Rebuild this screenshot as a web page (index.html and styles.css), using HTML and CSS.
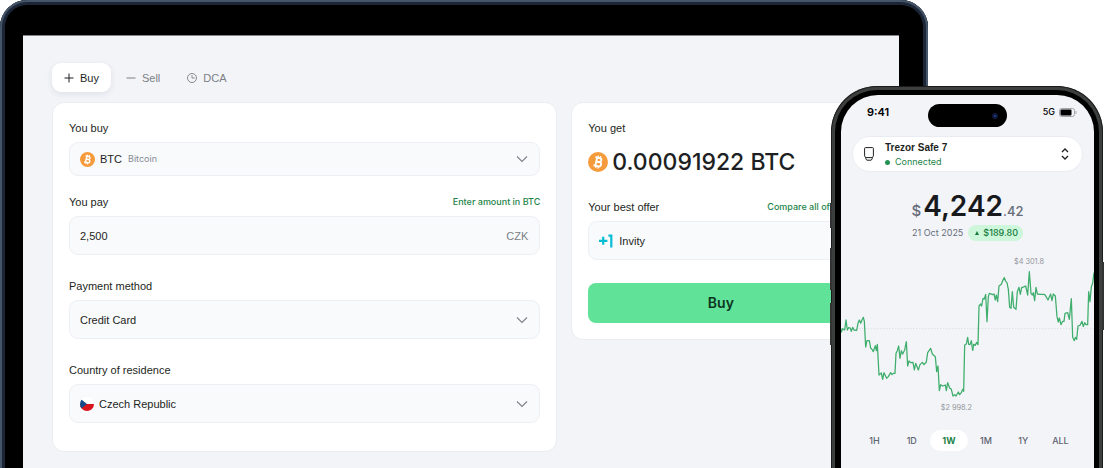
FILE: index.html
```html
<!DOCTYPE html>
<html lang="en">
<head>
<meta charset="utf-8">
<meta name="viewport" content="width=device-width, initial-scale=1">
<title>Trade</title>
<link rel="stylesheet" href="styles.css">
</head>
<body>
<svg width="0" height="0" class="defs" aria-hidden="true">
  <symbol id="btc" viewBox="0 0 20 20">
    <circle cx="10" cy="10" r="10" fill="#f59b3c"/>
    <g transform="rotate(13 10 10)" fill="none" stroke="#fff" stroke-width="1.9">
      <path d="M6.4 5.7h4.4a2 2 0 0 1 0 4.1H8.2M6.4 14.2h5a2.2 2.2 0 0 0 0-4.4H8.2M8.2 5.7v8.5"/>
      <path d="M9 3.6v2M11.4 3.6v2M9 14.4v2M11.4 14.4v2" stroke-width="1.3"/>
    </g>
  </symbol>
  <symbol id="chevron" viewBox="0 0 12 8">
    <path d="M1 1.5l5 5 5-5" fill="none" stroke="#7b8087" stroke-width="1.1"/>
  </symbol>
</svg>

<main class="stage">
  <section class="laptop">
    <div class="laptop-screen">
      <nav class="tabs" aria-label="Trade type">
        <button class="tab tab-active" type="button">
          <svg class="tab-icon" viewBox="0 0 10 10"><path d="M5 .5v9M.5 5h9" stroke="currentColor" fill="none"/></svg>Buy
        </button>
        <button class="tab" type="button">
          <svg class="tab-icon" viewBox="0 0 10 10"><path d="M.5 5h9" stroke="currentColor" fill="none"/></svg>Sell
        </button>
        <button class="tab" type="button">
          <svg class="tab-icon" viewBox="0 0 10 10"><circle cx="5" cy="5" r="4.5" stroke="currentColor" fill="none" stroke-width=".9"/><path d="M5 2.2V5h2.8" stroke="currentColor" fill="none" stroke-width=".9"/></svg>DCA
        </button>
      </nav>

      <div class="cards">
        <form class="card form">
          <div class="group">
            <label class="label" for="coin">You buy</label>
            <div class="field field-short">
              <svg class="coin"><use href="#btc"/></svg>
              <select id="coin" class="value"><option>BTC</option></select>
              <span class="note">Bitcoin</span>
              <svg class="chevron"><use href="#chevron"/></svg>
            </div>
          </div>
          <div class="group">
            <div class="label-row">
              <label class="label" for="amount">You pay</label>
              <a class="link" href="#amount">Enter amount in BTC</a>
            </div>
            <div class="field">
              <input id="amount" class="value value-wide" type="text" value="2,500">
              <span class="unit">CZK</span>
            </div>
          </div>
          <div class="group group-spaced">
            <label class="label" for="payment">Payment method</label>
            <div class="field">
              <select id="payment" class="value value-wide"><option>Credit Card</option></select>
              <svg class="chevron"><use href="#chevron"/></svg>
            </div>
          </div>
          <div class="group group-spaced">
            <label class="label" for="country">Country of residence</label>
            <div class="field">
              <svg class="flag" viewBox="0 0 14 14">
                <clipPath id="disc"><circle cx="7" cy="7" r="7"/></clipPath>
                <g clip-path="url(#disc)"><path d="M0 0h14v7H0z" fill="#fff"/><path d="M0 7h14v7H0z" fill="#d8141c"/><path d="M0 1.5L7 7l-7 5.5z" fill="#164a86"/></g>
              </svg>
              <select id="country" class="value value-wide"><option>Czech Republic</option></select>
              <svg class="chevron"><use href="#chevron"/></svg>
            </div>
          </div>
        </form>

        <section class="card quote">
          <h2 class="label">You get</h2>
          <p class="receive"><svg class="coin-large"><use href="#btc"/></svg>0.00091922 BTC</p>
          <div class="label-row">
            <label class="label" for="offer">Your best offer</label>
            <a class="link" href="#offer">Compare all offers</a>
          </div>
          <div class="field">
            <svg class="invity" viewBox="0 0 14 14"><path d="M0 6.8h8.4M4.2 2.8v8M9.4 1.7h2.9V13.4" fill="none" stroke="#08bcd4" stroke-width="2.2"/></svg>
            <select id="offer" class="value value-wide"><option>Invity</option></select>
          </div>
          <button class="buy" type="button">Buy</button>
        </section>
      </div>
    </div>
  </section>

  <section class="phone">
    <i class="key key-action"></i><i class="key key-up"></i><i class="key key-down"></i><i class="key key-power"></i>
    <div class="bezel">
      <div class="phone-screen">
        <header class="status">
          <span class="time">9:41</span>
          <span class="island"><i class="lens"></i></span>
          <span class="signal">5G
            <svg class="battery" viewBox="0 0 18 9"><rect x=".5" y=".5" width="15" height="8" rx="2" fill="none" stroke="#a3a5aa"/><rect x="1.5" y="1.5" width="11" height="6" rx="1" fill="#000"/><path d="M17 3.2v2.6" stroke="#a3a5aa"/></svg>
          </span>
        </header>

        <button class="device" type="button">
          <svg class="device-icon" viewBox="0 0 10 14"><path d="M1.5.6h7a.9.9 0 0 1 .9.9v7.4L8.4 10.6H1.6L.6 8.9V1.5a.9.9 0 0 1 .9-.9zM1.8 10.6v1.2l1 1.4h4.4l1-1.4v-1.2" fill="none" stroke="#1d1f22" stroke-width="1"/></svg>
          <span class="device-text"><span class="device-name">Trezor Safe 7</span><span class="device-state">Connected</span></span>
          <svg class="sorter" viewBox="0 0 8 12"><path d="M1 4l3-3 3 3M1 8l3 3 3-3" fill="none" stroke="#1d1f22" stroke-width="1.3"/></svg>
        </button>

        <p class="balance"><span class="currency">$</span><strong class="whole">4,242</strong><span class="cents">.42</span></p>
        <p class="change"><span>21 Oct 2025</span><span class="gain"><svg class="rise" viewBox="0 0 4 4"><path d="M2 0l2 4H0z" fill="#157a3c"/></svg>$189.80</span></p>

        <svg class="chart" viewBox="15 0 759 486" role="img" aria-label="Balance over one week">
          <path d="M15 236H774" stroke="#dcdee3" stroke-width="3" stroke-dasharray="4 5"/>
          <g fill="none" stroke="#3fae6c" stroke-width="3.8" stroke-linejoin="round">
            <polyline points="13,232 16,246 20,236 26,240 30,210 34,240 38,233 43,234 46,244 50,232 54,240 62,241 66,220 70,210 74,220 78,210 82,202 85,214 89,291 93,272 100,272 104,294 108,298 112,305 118,287 121,302 124,283 129,375 136,369 140,388 144,368 152,385 157,380 164,368 168,374 172,370 177,370 180,310 184,302 188,288 192,325 196,302 200,312 206,300 211,275 215,348 219,333 224,338 231,337 235,360 239,340 247,360 252,344 259,337 264,344 271,336 275,308 284,295 289,312 298,320 302,365 306,348 310,422 314,404 320,408 328,405 331,422 335,398 341,414 346,418 351,438 356,434 360,438 367,426 371,434 376,428 380,418 383,424 386,285 391,282 395,262 398,283 402,284 406,272 410,302"/>
            <polyline transform="translate(372)" points="38,302 41,283 46,286 50,277 54,284 57,168 62,162 65,168 69,145 73,147 77,133 81,215 85,140 88,130 98,134 102,132 106,150 109,135 113,155 117,108 124,103 128,92 133,83 137,94 141,98 145,118 149,172 153,175 157,125 161,172 168,178 172,125 177,112 181,133 185,113 193,110 197,108 203,135 208,65 213,130 217,135 220,128 224,152 228,112 232,132 240,133 252,133 256,136 264,150 272,132 276,152 280,132 286,138 291,200 295,216 298,204 303,224 308,214 312,214 315,190 323,188 328,208 334,146 338,262 343,272 346,262 350,268 354,228 360,226 366,214 370,230 374,218 378,224 383,224 386,125 390,155 394,110 398,100 402,68"/>
          </g>
          <text class="chart-label" x="579" y="43">$4 301.8</text>
          <text class="chart-label" x="361" y="480">$2 998.2</text>
        </svg>

        <nav class="ranges" aria-label="Chart range">
          <button class="range" type="button">1H</button>
          <button class="range" type="button">1D</button>
          <button class="range range-active" type="button">1W</button>
          <button class="range" type="button">1M</button>
          <button class="range" type="button">1Y</button>
          <button class="range" type="button">ALL</button>
        </nav>
      </div>
    </div>
  </section>
</main>
</body>
</html>
```
FILE: styles.css
```css
* { box-sizing: border-box; }

body {
  margin: 0;
  background: #fff;
  color: #1d1f22;
  font: 500 11px/14px Inter, "Liberation Sans", sans-serif;
}

h2, p { margin: 0; font: inherit; }
button, input, select { margin: 0; padding: 0; border: 0; background: none; color: inherit; font: inherit; }
select { appearance: none; }
svg { display: block; flex: none; }
.defs { position: absolute; }

.stage { position: relative; height: 100vh; overflow: hidden; }

/* Laptop */
.laptop {
  width: 84.1%;
  min-height: 600px;
  padding: 35px 29px 0 23px;
  border-radius: 27px 27px 0 0;
  background: #000;
  box-shadow: inset 0 0 0 2px #46546a, inset 0 0 0 5px #1c2636;
}
.laptop-screen {
  min-height: 565px;
  padding: 27px 29px 0;
  background: #f3f4f8;
  border-top: 1px solid #85868a;
}

.tabs { display: flex; gap: 5px; margin-bottom: 10px; }
.tab { display: flex; align-items: center; gap: 6px; height: 29px; padding: 0 12px; border-radius: 9px; color: #7b8087; }
.tab + .tab { padding: 0 10px; }
.tab + .tab + .tab { padding-left: 12px; }
.tab-active { background: #fff; color: #1d1f22; box-shadow: 0 2px 6px #1d264018; }
.tab-icon { width: 10px; height: 10px; }

.cards { display: grid; grid-template-columns: 505fr 299fr; align-items: start; gap: 14px; }
.card { padding: 18px 16px 16px; border: 1px solid #e9ecf1; border-radius: 12px; background: #fff; }
.form { padding-bottom: 28px; }
.group { display: flex; flex-direction: column; gap: 7px; }
.group + .group { margin-top: 19px; }
.group + .group-spaced { margin-top: 24px; }
.label { display: block; }
.tab, .label, .value, .unit { font-family: "Liberation Sans", sans-serif; font-weight: 400; }
.label-row { display: flex; justify-content: space-between; align-items: center; white-space: nowrap; }
.link { color: #1e8449; font-size: 9px; text-decoration: none; }

.field {
  display: flex;
  align-items: center;
  height: 39px;
  padding: 0 11px 0 10px;
  border: 1px solid #edeff3;
  border-radius: 9px;
  background: #f9fafc;
}
.field-short { height: 34px; }
.value { height: 20px; outline: 0; }
.value-wide { flex: 1; min-width: 0; }
.coin { width: 15px; height: 15px; margin-right: 5px; }
.note { margin-left: 6px; color: #858a93; font-size: 9px; font-weight: 400; }
.unit { color: #7b8087; }
.chevron { width: 12px; height: 8px; margin-left: auto; }
.flag { width: 14px; height: 14px; margin-right: 5px; }
.invity { width: 14px; height: 14px; margin-right: 6px; }

.receive { display: flex; align-items: center; gap: 4px; margin: 13px 0 24px; font-size: 23px; line-height: 28px; white-space: nowrap; }
.coin-large { width: 20px; height: 20px; }
.quote .link { padding-right: 7px; }
.quote .field { margin-top: 7px; }
.buy { display: block; width: 100%; height: 40px; margin-top: 23px; border-radius: 8px; background: #60e399; color: #0c3520; font-size: 14px; font-weight: 600; }

/* Phone */
.phone {
  position: absolute;
  top: 86px;
  right: 1px;
  width: 272px;
  height: 560px;
  padding: 4px;
  border-radius: 46px;
  background: #3d3e3e;
  box-shadow: inset 0 0 0 1px #1c1c1c;
}
.bezel { height: 100%; padding: 5px 5px 5px 6px; border-radius: 42px; background: #000; }
.phone-screen { height: 100%; padding-top: 9px; border-radius: 37px; background: #f3f4f8; overflow: hidden; }
.key { position: absolute; width: 2px; background: #333; }
.key-action { left: -1px; top: 117px; height: 25px; }
.key-up { left: -1px; top: 162px; height: 42px; }
.key-down { left: -1px; top: 217px; height: 42px; }
.key-power { right: -1px; top: 176px; height: 68px; }

.status { display: grid; grid-template-columns: 1fr 79px 1fr; height: 23px; color: #000; }
.time { padding-left: 26px; line-height: 16px; font-weight: 600; }
.island { display: flex; justify-content: flex-end; align-items: center; padding-right: 9px; border-radius: 12px; background: #000; }
.lens { width: 6px; height: 6px; border: 2px solid #10183c; border-radius: 50%; background: #24479c; }
.signal { display: flex; justify-content: flex-end; align-items: center; gap: 4px; height: 16px; padding-right: 17px; font-size: 9px; }
.battery { width: 18px; height: 9px; }

.device {
  display: flex;
  align-items: center;
  width: calc(100% - 22px);
  height: 36px;
  margin: 9px 11px 0;
  padding: 0 13px 0 11px;
  border: 1px solid #e9ecf1;
  border-radius: 18px;
  background: #fff;
  text-align: left;
}
.device-icon { width: 10px; height: 14px; margin-right: 11px; }
.device-text { display: flex; flex: 1; flex-direction: column; padding-top: 2px; }
.device-name { font: 700 10px/14px "Liberation Sans", sans-serif; }
.device-state { display: flex; align-items: center; gap: 5px; color: #1e8449; font-size: 9px; font-weight: 400; }
.device-state::before { content: ""; width: 5px; height: 5px; border-radius: 50%; background: #239354; }
.sorter { width: 8px; height: 12px; }

.balance { display: flex; justify-content: center; align-items: baseline; margin-top: 17px; color: #666b78; font-size: 13px; line-height: 34px; }
.currency { margin-right: 2px; font-size: 15px; }
.whole { color: #17191c; font-size: 28px; font-weight: 600; }
.change { display: flex; justify-content: center; align-items: center; gap: 5px; margin-top: -3px; color: #666b78; font-size: 9px; font-weight: 400; }
.gain { display: flex; align-items: center; gap: 4px; height: 16px; padding: 0 5px 0 7px; border-radius: 8px; background: #cdf6da; color: #157a3c; font-weight: 500; }
.rise { width: 4px; height: 4px; }

.chart { width: 100%; height: auto; margin-top: 9px; }
.chart-label { fill: #92959b; font-size: 22px; font-weight: 400; text-anchor: middle; }

.ranges { display: grid; grid-template-columns: repeat(6, 1fr); margin: 18px 15px 0; }
.range { height: 21px; border-radius: 11px; color: #5d6370; font-size: 9px; }
.range-active { background: #fff; color: #1e8449; font-weight: 700; }
```
